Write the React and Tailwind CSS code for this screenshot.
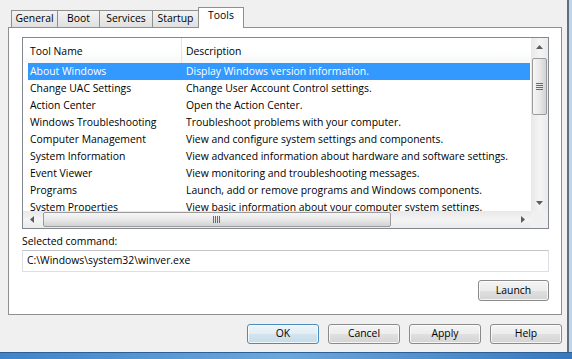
import React from 'react'

const tools = [
  ['About Windows', 'Display Windows version information.'],
  ['Change UAC Settings', 'Change User Account Control settings.'],
  ['Action Center', 'Open the Action Center.'],
  ['Windows Troubleshooting', 'Troubleshoot problems with your computer.'],
  ['Computer Management', 'View and configure system settings and components.'],
  ['System Information', 'View advanced information about hardware and software settings.'],
  ['Event Viewer', 'View monitoring and troubleshooting messages.'],
  ['Programs', 'Launch, add or remove programs and Windows components.'],
  ['System Properties', 'View basic information about your computer system settings.'],
]

const tabs = [
  { name: 'General', w: 'w-[46px]' },
  { name: 'Boot', w: 'w-[42px]' },
  { name: 'Services', w: 'w-[53px]' },
  { name: 'Startup', w: 'w-[46px]' },
]

const Btn = ({ children, primary }) => (
  <div
    className={
      'h-[20px] w-[72px] rounded-[3px] border flex items-center justify-center shadow-[inset_0_0_0_1px_rgba(255,255,255,0.75)] ' +
      (primary
        ? 'border-[#4a8dbd] bg-[linear-gradient(#eef5fa_0%,#e2edf4_50%,#d3e4ef_50%,#c6dbe9_100%)]'
        : 'border-[#8a8a8a] bg-[linear-gradient(#f4f4f4_0%,#ececec_50%,#e0e0e0_50%,#d4d4d4_100%)]')
    }
  >
    {children}
  </div>
)

const Arrow = ({ dir }) => {
  const pts = {
    up: '0,4 3.5,0 7,4',
    down: '0,0 3.5,4 7,0',
    left: '4,0 0,3.5 4,7',
    right: '0,0 4,3.5 0,7',
  }[dir]
  const vertical = dir === 'up' || dir === 'down'
  return (
    <svg width={vertical ? 7 : 4} height={vertical ? 4 : 7}>
      <polygon points={pts} fill="#5c5c5c" />
    </svg>
  )
}

export default function App() {
  return (
    <div className="w-[572px] h-[359px] bg-[#f0f0f0] overflow-hidden flex flex-col font-['Open_Sans',sans-serif] text-[10.4px] text-black">
      <div className="flex h-[352px]">
        <div className="w-[567px] flex flex-col pt-[7px]">
          {/* tabs */}
          <div className="h-[20px] flex items-end pl-[11px]">
            {tabs.map((t) => (
              <div
                key={t.name}
                className={`${t.w} h-[17px] border-t border-l border-[#8e8f8f] bg-linear-to-b from-[#f3f3f3] to-[#e0e0e0] flex items-center justify-center`}
              >
                {t.name}
              </div>
            ))}
            <div className="relative z-10 -mb-px w-[46px] h-[21px] border-t border-l border-r border-[#8e8f8f] bg-white flex items-center justify-center pb-[4px]">
              Tools
            </div>
          </div>

          {/* panel */}
          <div className="ml-[8px] w-[554px] h-[288px] border border-[#8e8f8f] bg-white flex flex-col pt-[9px] pl-[13px] pr-[12px]">
            <div className="h-[192px] border border-[#828790] flex flex-col">
              <div className="flex flex-1 min-h-0">
                <div className="flex-1 overflow-hidden">
                  <div className="h-[25px] flex items-stretch bg-linear-to-b from-white via-white to-[#f6f7f8]">
                    <div className="w-[159px] pl-[7px] pt-[2px] border-r border-[#e3e4e6] flex items-center">Tool Name</div>
                    <div className="pl-[4px] pt-[2px] flex items-center">Description</div>
                  </div>
                  {tools.map(([name, desc], i) => (
                    <div
                      key={name}
                      className={`h-[17px] ml-[5px] mr-[1px] flex items-center whitespace-nowrap ${i === 0 ? 'bg-[#3399ff] text-white' : ''}`}
                    >
                      <div className="w-[153px] pl-[2px]">{name}</div>
                      <div className="pl-[5px]">{desc}</div>
                    </div>
                  ))}
                </div>
                {/* vertical scrollbar */}
                <div className="w-[17px] flex flex-col bg-linear-to-r from-[#e8e8e8] via-[#f4f4f4] to-[#ebebeb]">
                  <div className="h-[17px] flex items-center justify-center">
                    <Arrow dir="up" />
                  </div>
                  <div className="mt-[3px] mx-[1px] h-[57px] rounded-[2px] border border-[#9b9b9b] bg-linear-to-r from-[#f6f6f6] via-[#e9e9e9] to-[#d2d2d2] flex items-center justify-center">
                    <svg width="7" height="8">
                      <rect x="0" y="0" width="7" height="1" fill="#6a6a6a" />
                      <rect x="0" y="2" width="7" height="1" fill="#6a6a6a" />
                      <rect x="0" y="4" width="7" height="1" fill="#6a6a6a" />
                      <rect x="0" y="6" width="7" height="1" fill="#6a6a6a" />
                    </svg>
                  </div>
                  <div className="flex-1" />
                  <div className="h-[17px] flex items-center justify-center">
                    <Arrow dir="down" />
                  </div>
                </div>
              </div>
              {/* horizontal scrollbar */}
              <div className="h-[17px] flex">
                <div className="flex-1 flex items-center bg-linear-to-b from-[#e8e8e8] via-[#f4f4f4] to-[#ebebeb]">
                  <div className="w-[17px] h-full flex items-center justify-center">
                    <Arrow dir="left" />
                  </div>
                  <div className="ml-[3px] w-[348px] h-[15px] rounded-[2px] border border-[#9b9b9b] bg-linear-to-b from-[#f6f6f6] via-[#e9e9e9] to-[#d2d2d2] flex items-center justify-center">
                    <svg width="8" height="7">
                      <rect x="0" y="0" width="1" height="7" fill="#6a6a6a" />
                      <rect x="2" y="0" width="1" height="7" fill="#6a6a6a" />
                      <rect x="4" y="0" width="1" height="7" fill="#6a6a6a" />
                      <rect x="6" y="0" width="1" height="7" fill="#6a6a6a" />
                    </svg>
                  </div>
                  <div className="flex-1" />
                  <div className="w-[17px] h-full flex items-center justify-center">
                    <Arrow dir="right" />
                  </div>
                </div>
                <div className="w-[17px] bg-[#f0f0f0]" />
              </div>
            </div>

            <div className="mt-[5px] h-[14px] leading-[14px]">Selected command:</div>
            <div className="mt-[2px] h-[22px] border border-[#dcdfe3] border-t-[#c2c4c8] flex items-center pl-[4px]">
              C:\Windows\system32\winver.exe
            </div>
            <div className="mt-[8px] self-end">
              <div className="h-[21px] w-[71px] rounded-[3px] border border-[#8a8a8a] bg-[linear-gradient(#f4f4f4_0%,#ececec_50%,#e0e0e0_50%,#d4d4d4_100%)] shadow-[inset_0_0_0_1px_rgba(255,255,255,0.75)] flex items-center justify-center">
                Launch
              </div>
            </div>
          </div>

          {/* dialog buttons */}
          <div className="mt-[9px] flex justify-end gap-[9px] pr-[5px]">
            <Btn primary>OK</Btn>
            <Btn>Cancel</Btn>
            <Btn>Apply</Btn>
            <Btn>Help</Btn>
          </div>
        </div>
        <div className="w-[5px] border-l-2 border-[#5d6f84] bg-[#c3d5e8]" />
      </div>
      <div className="flex-1 border-t border-[#2d5f94] bg-linear-to-r from-[#3f84c9] via-[#6aa7dd] to-[#3878be]" />
    </div>
  )
}
